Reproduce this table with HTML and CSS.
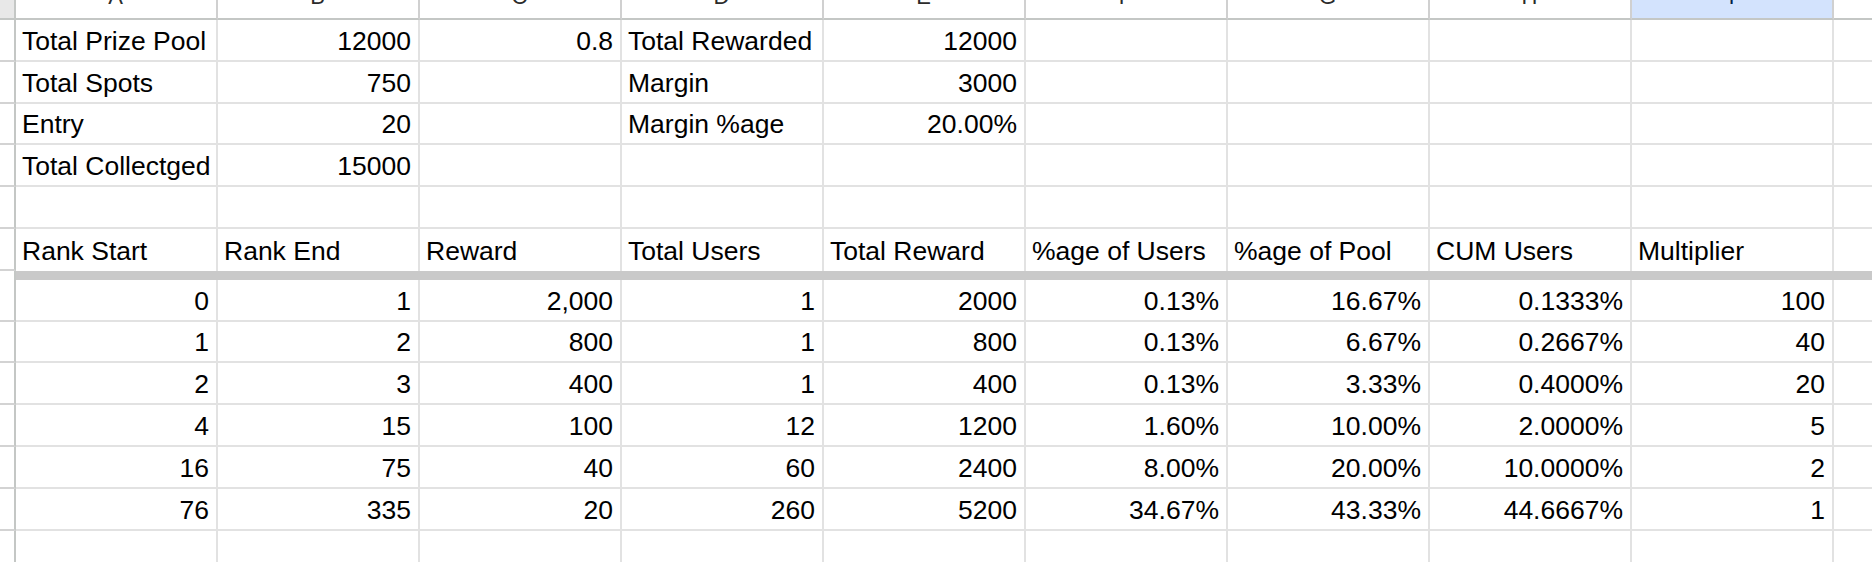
FILE: index.html
```html
<!DOCTYPE html>
<html lang="en">
  <head>
    <meta charset="UTF-8" />
    <meta name="viewport" content="width=device-width, initial-scale=1.0" />
    <title>Prize Pool Sheet</title>
    <link rel="stylesheet" href="styles.css">
  </head>
  <body>
    <div class="sheet">
      <!-- column letters -->
      <div class="row head">
        <div class="rh"></div>
        <div class="c">A</div>
        <div class="c">B</div>
        <div class="c">C</div>
        <div class="c">D</div>
        <div class="c">E</div>
        <div class="c">F</div>
        <div class="c">G</div>
        <div class="c">H</div>
        <div class="c sel">I</div>
        <div class="c">J</div>
      </div>

      <!-- summary block -->
      <div class="row">
        <div class="rh"></div>
        <div class="c">Total Prize Pool</div>
        <div class="c r">12000</div>
        <div class="c r">0.8</div>
        <div class="c">Total Rewarded</div>
        <div class="c r">12000</div>
        <div class="c"></div>
        <div class="c"></div>
        <div class="c"></div>
        <div class="c"></div>
        <div class="c"></div>
      </div>
      <div class="row">
        <div class="rh"></div>
        <div class="c">Total Spots</div>
        <div class="c r">750</div>
        <div class="c"></div>
        <div class="c">Margin</div>
        <div class="c r">3000</div>
        <div class="c"></div>
        <div class="c"></div>
        <div class="c"></div>
        <div class="c"></div>
        <div class="c"></div>
      </div>
      <div class="row">
        <div class="rh"></div>
        <div class="c">Entry</div>
        <div class="c r">20</div>
        <div class="c"></div>
        <div class="c">Margin %age</div>
        <div class="c r">20.00%</div>
        <div class="c"></div>
        <div class="c"></div>
        <div class="c"></div>
        <div class="c"></div>
        <div class="c"></div>
      </div>
      <div class="row">
        <div class="rh"></div>
        <div class="c">Total Collectged</div>
        <div class="c r">15000</div>
        <div class="c"></div>
        <div class="c"></div>
        <div class="c"></div>
        <div class="c"></div>
        <div class="c"></div>
        <div class="c"></div>
        <div class="c"></div>
        <div class="c"></div>
      </div>
      <div class="row">
        <div class="rh"></div>
        <div class="c"></div>
        <div class="c"></div>
        <div class="c"></div>
        <div class="c"></div>
        <div class="c"></div>
        <div class="c"></div>
        <div class="c"></div>
        <div class="c"></div>
        <div class="c"></div>
        <div class="c"></div>
      </div>

      <!-- table header, frozen -->
      <div class="row frozen">
        <div class="rh"></div>
        <div class="c">Rank Start</div>
        <div class="c">Rank End</div>
        <div class="c">Reward</div>
        <div class="c">Total Users</div>
        <div class="c">Total Reward</div>
        <div class="c">%age of Users</div>
        <div class="c">%age of Pool</div>
        <div class="c">CUM Users</div>
        <div class="c">Multiplier</div>
        <div class="c"></div>
      </div>
      <div class="freeze-bar"></div>

      <!-- rank rows -->
      <div class="row">
        <div class="rh"></div>
        <div class="c r">0</div>
        <div class="c r">1</div>
        <div class="c r">2,000</div>
        <div class="c r">1</div>
        <div class="c r">2000</div>
        <div class="c r">0.13%</div>
        <div class="c r">16.67%</div>
        <div class="c r">0.1333%</div>
        <div class="c r">100</div>
        <div class="c"></div>
      </div>
      <div class="row">
        <div class="rh"></div>
        <div class="c r">1</div>
        <div class="c r">2</div>
        <div class="c r">800</div>
        <div class="c r">1</div>
        <div class="c r">800</div>
        <div class="c r">0.13%</div>
        <div class="c r">6.67%</div>
        <div class="c r">0.2667%</div>
        <div class="c r">40</div>
        <div class="c"></div>
      </div>
      <div class="row">
        <div class="rh"></div>
        <div class="c r">2</div>
        <div class="c r">3</div>
        <div class="c r">400</div>
        <div class="c r">1</div>
        <div class="c r">400</div>
        <div class="c r">0.13%</div>
        <div class="c r">3.33%</div>
        <div class="c r">0.4000%</div>
        <div class="c r">20</div>
        <div class="c"></div>
      </div>
      <div class="row">
        <div class="rh"></div>
        <div class="c r">4</div>
        <div class="c r">15</div>
        <div class="c r">100</div>
        <div class="c r">12</div>
        <div class="c r">1200</div>
        <div class="c r">1.60%</div>
        <div class="c r">10.00%</div>
        <div class="c r">2.0000%</div>
        <div class="c r">5</div>
        <div class="c"></div>
      </div>
      <div class="row">
        <div class="rh"></div>
        <div class="c r">16</div>
        <div class="c r">75</div>
        <div class="c r">40</div>
        <div class="c r">60</div>
        <div class="c r">2400</div>
        <div class="c r">8.00%</div>
        <div class="c r">20.00%</div>
        <div class="c r">10.0000%</div>
        <div class="c r">2</div>
        <div class="c"></div>
      </div>
      <div class="row">
        <div class="rh"></div>
        <div class="c r">76</div>
        <div class="c r">335</div>
        <div class="c r">20</div>
        <div class="c r">260</div>
        <div class="c r">5200</div>
        <div class="c r">34.67%</div>
        <div class="c r">43.33%</div>
        <div class="c r">44.6667%</div>
        <div class="c r">1</div>
        <div class="c"></div>
      </div>
      <div class="row">
        <div class="rh"></div>
        <div class="c"></div>
        <div class="c"></div>
        <div class="c"></div>
        <div class="c"></div>
        <div class="c"></div>
        <div class="c"></div>
        <div class="c"></div>
        <div class="c"></div>
        <div class="c"></div>
        <div class="c"></div>
      </div>
    </div>
  </body>
</html>
```

FILE: styles.css
```css
* {
  box-sizing: border-box;
}
html,
body {
  margin: 0;
}
body {
  background: #ffffff;
  overflow: hidden;
  font-family: "Liberation Sans", Arial, Helvetica, sans-serif;
  color: #000000;
}
/* the grid is scrolled so only the bottom of the letter row shows */
.sheet {
  width: max-content;
  margin-top: -28px;
}
.row {
  display: flex;
  height: 41.8px;
}
.rh {
  flex: none;
  width: 16px;
  border-right: 2px solid #c4c7c5;
  border-bottom: 2px solid #d3d3d3;
}
.c {
  flex: none;
  width: 202px;
  display: flex;
  align-items: flex-end;
  padding: 0 7px 4px 6px;
  border-right: 2px solid #e2e2e2;
  border-bottom: 2px solid #e2e2e2;
  font-size: 26.5px;
  line-height: 30px;
  white-space: nowrap;
  overflow: hidden;
}
.r {
  justify-content: flex-end;
}
.head {
  height: 48px;
}
.head .rh {
  background: #e8e8e8;
  border-bottom-color: #c4c7c5;
}
.head .c {
  justify-content: center;
  padding-bottom: 10px;
  border-right-color: #d0d0d0;
  border-bottom-color: #c4c7c5;
  font-size: 22px;
  line-height: 22px;
  color: #2b2b2b;
}
.head .sel {
  background: #d3e3fd;
  color: #041e49;
}
.frozen .c {
  border-bottom-width: 0;
  padding-bottom: 5px;
}
.freeze-bar {
  height: 9px;
  background: linear-gradient(to right, #ffffff 14px, #c4c7c5 14px, #c4c7c5 16px, #c9c9c9 16px);
}
```
